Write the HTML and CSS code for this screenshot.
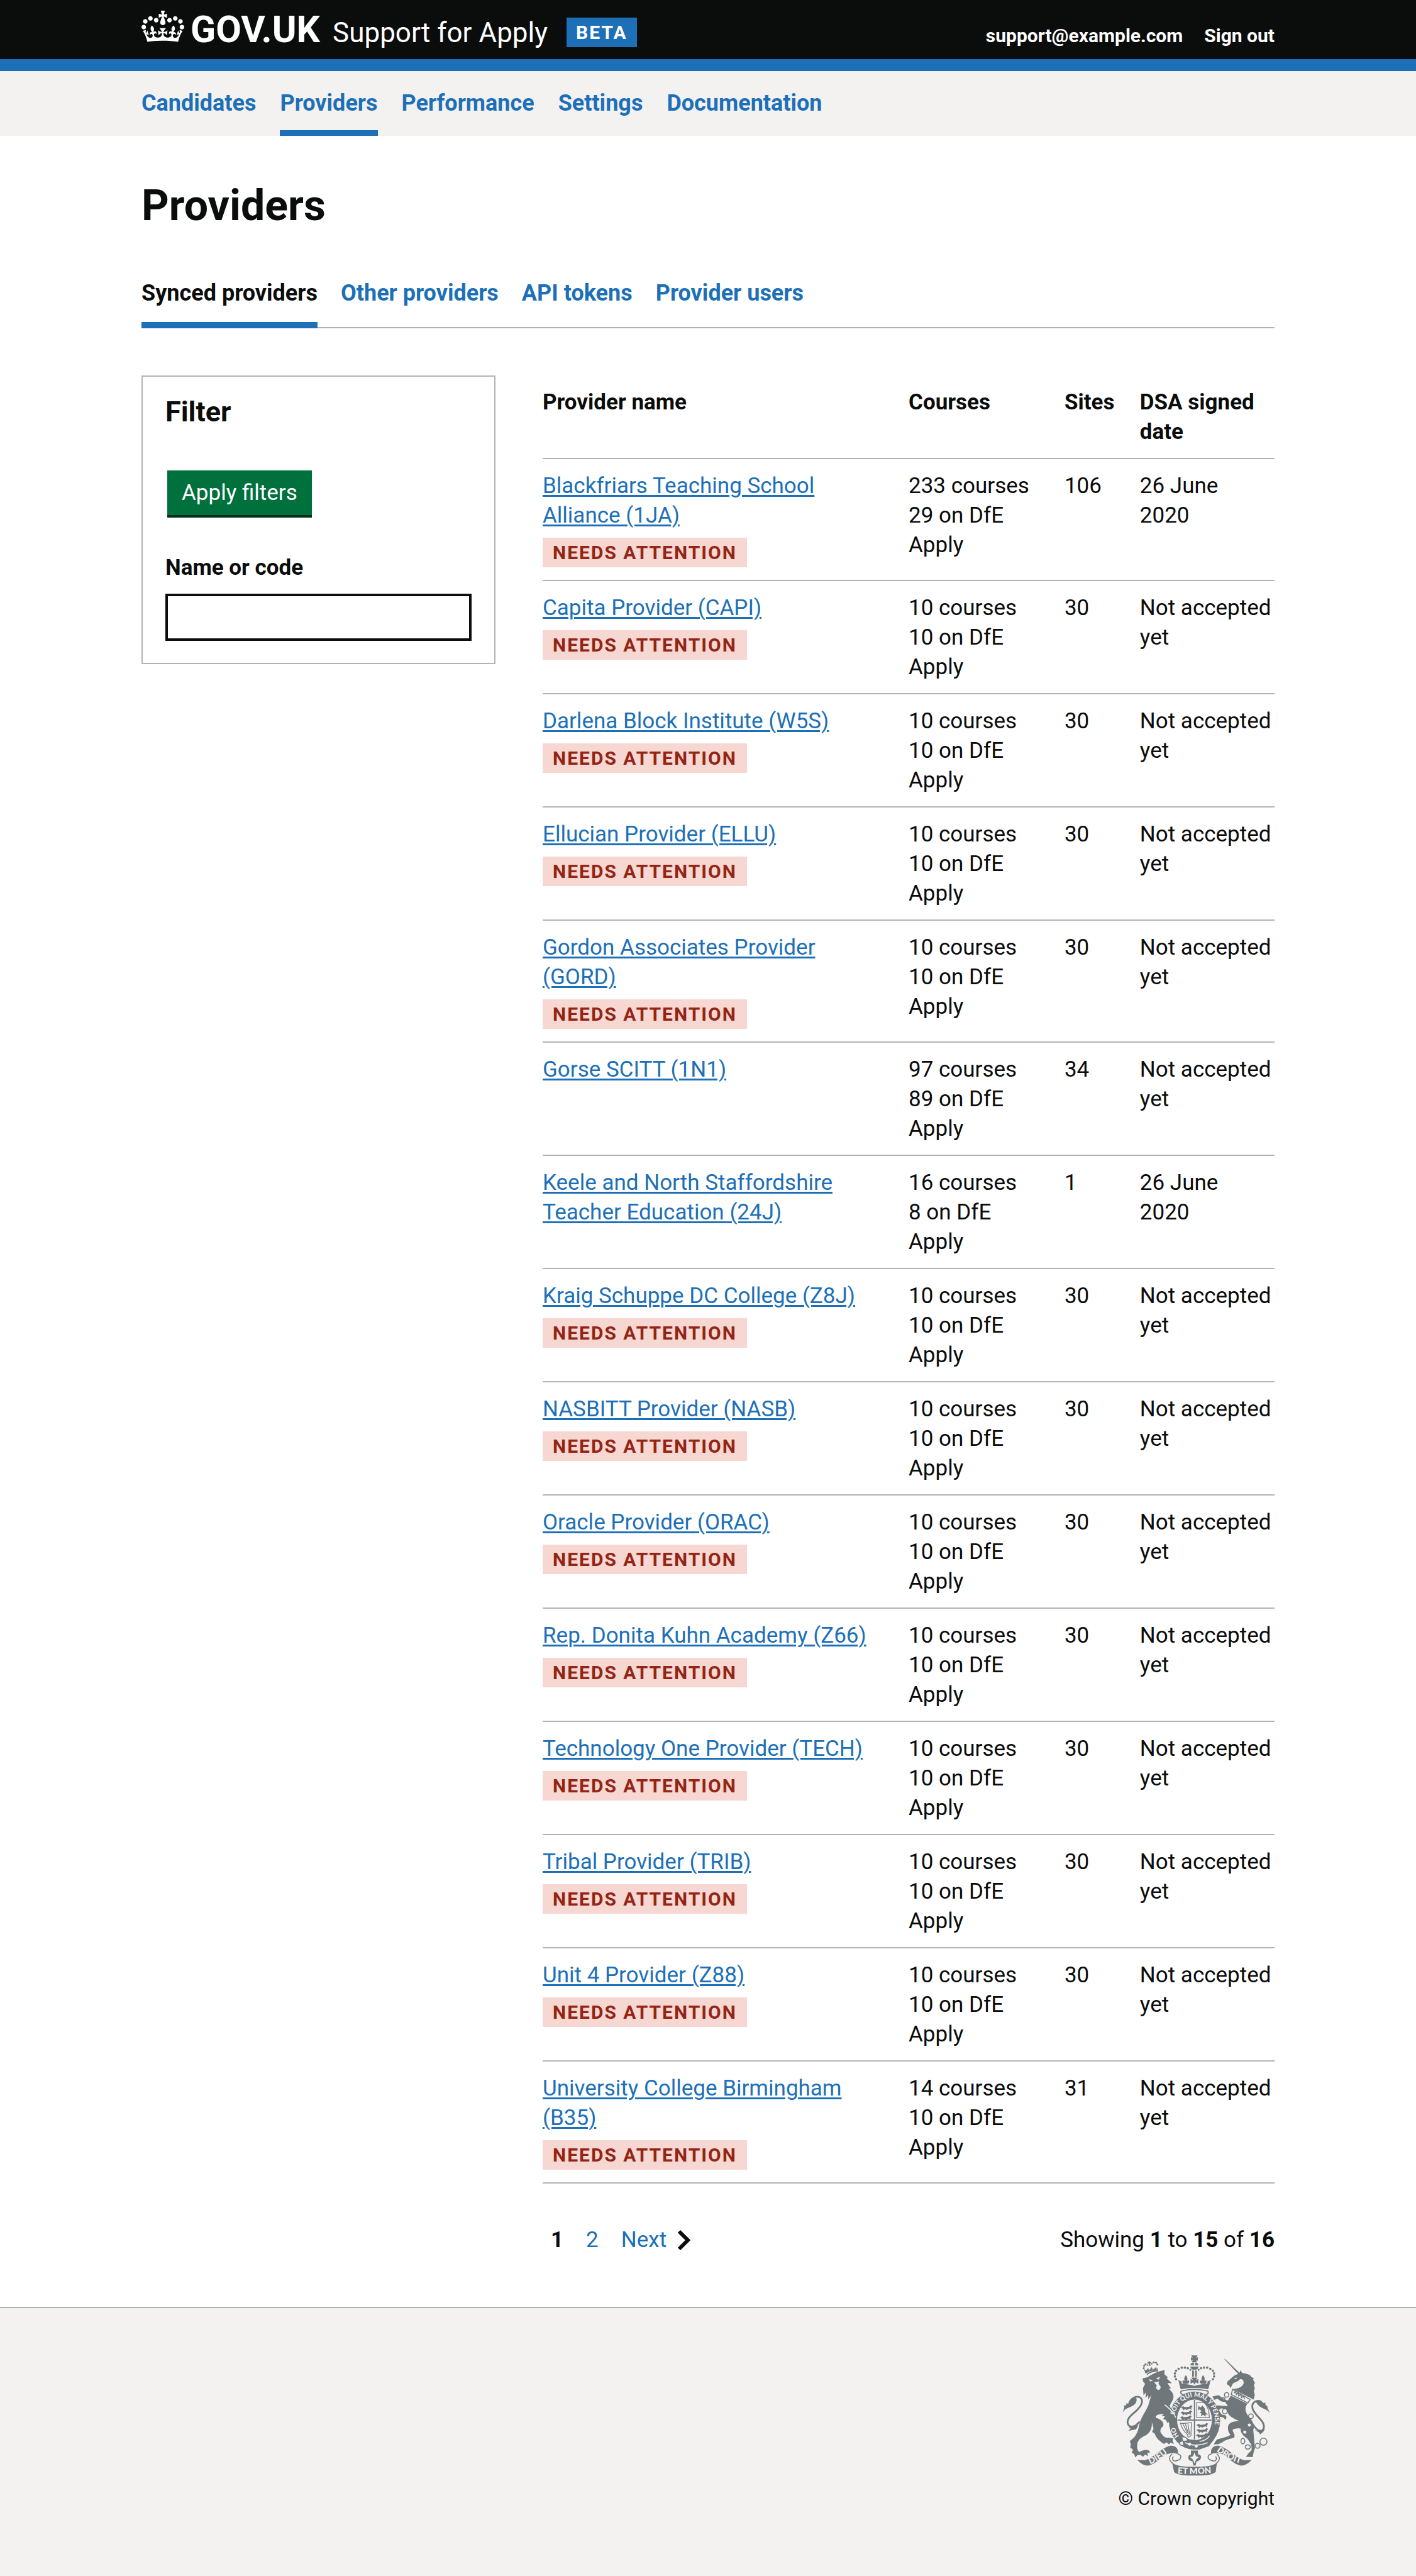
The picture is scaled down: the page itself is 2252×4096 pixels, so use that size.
FILE: index.html
```html
<!DOCTYPE html>
<html lang="en">
<head>
<meta charset="utf-8">
<title>Providers - Support for Apply</title>
<link rel="stylesheet" href="styles.css">
</head>
<body>
<header class="header">
  <div class="container header-row">
    <a class="logo" href="#">
      <svg class="crown" viewBox="0 0 132 97" aria-hidden="true"><path fill="currentColor" fill-rule="evenodd" d="M25 30.2c3.5 1.5 7.7-.2 9.1-3.7 1.5-3.6-.2-7.8-3.9-9.2-3.6-1.4-7.6.3-9.1 3.9-1.4 3.5.3 7.5 3.9 9zM9 39.5c3.6 1.5 7.8-.2 9.2-3.7 1.5-3.6-.2-7.8-3.9-9.1-3.6-1.5-7.6.2-9.1 3.8-1.4 3.5.3 7.5 3.8 9zM4.4 57.2c3.5 1.5 7.7-.2 9.1-3.8 1.5-3.6-.2-7.7-3.9-9.1-3.5-1.5-7.6.3-9.1 3.8-1.4 3.5.3 7.6 3.9 9.1zm38.3-21.4c3.5 1.5 7.7-.2 9.1-3.8 1.5-3.6-.2-7.7-3.9-9.1-3.6-1.5-7.6.3-9.1 3.8-1.3 3.6.4 7.7 3.9 9.1zm64.4-5.6c-3.6 1.5-7.8-.2-9.1-3.7-1.5-3.6.2-7.8 3.8-9.2 3.6-1.4 7.7.3 9.2 3.9 1.3 3.5-.4 7.5-3.9 9zm15.9 9.3c-3.6 1.5-7.7-.2-9.1-3.7-1.5-3.6.2-7.8 3.7-9.1 3.6-1.5 7.7.2 9.2 3.8 1.5 3.5-.3 7.5-3.8 9zm4.7 17.7c-3.6 1.5-7.8-.2-9.2-3.8-1.5-3.6.2-7.7 3.9-9.1 3.6-1.5 7.7.3 9.2 3.8 1.3 3.5-.4 7.6-3.9 9.1zM89.3 35.8c-3.6 1.5-7.8-.2-9.2-3.8-1.4-3.6.2-7.7 3.9-9.1 3.6-1.5 7.7.3 9.2 3.8 1.4 3.6-.3 7.7-3.9 9.1zM69.7 17.7l8.9 4.7V9.3l-8.9 2.8c-.2-.3-.5-.6-.9-.9L72.4 0H59.6l3.5 11.2c-.3.3-.6.5-.9.9l-8.8-2.8v13.1l8.8-4.7c.3.3.6.7.9.9l-5 15.4v.1c-.2.8-.4 1.6-.4 2.4 0 4.1 3.1 7.5 7 8.1h.2c.3 0 .7.1 1 .1.4 0 .7 0 1-.1h.2c4-.6 7.1-4.1 7.1-8.1 0-.8-.1-1.7-.4-2.4V34l-5.1-15.4c.4-.2.7-.6 1-.9zM66 92.8c16.9 0 32.8 1.1 47.1 3.2 4-16.9 8.9-26.7 14-33.5l-9.6-3.4c1 4.9 1.1 7.2 0 10.2-1.5-1.4-3-4.3-4.2-8.7L108.6 76c2.8-2 5-3.2 7.5-3.3-4.4 9.4-10 11.9-13.6 11.2-4.3-.8-6.3-4.6-5.6-7.9 1-4.7 5.7-5.9 8-.5 4.3-8.7-3-11.4-7.6-8.8 7.1-7.2 7.9-13.5 2.1-21.1-8 6.1-8.1 12.3-4.5 20.8-4.7-5.4-12.1-2.5-9.5 6.2 3.4-5.2 7.9-2 7.2 3.1-.6 4.3-6.4 7.8-13.5 7.2-10.3-.9-10.9-8-11.2-13.8 2.5-.5 7.1 1.8 11 7.3L80.2 60c-4.1 4.4-8 5.3-12.3 5.4 1.4-4.4 8-11.6 8-11.6H55.5s6.4 7.2 7.9 11.6c-4.2-.1-8-1-12.3-5.4l1.4 16.4c3.9-5.5 8.5-7.7 10.9-7.3-.3 5.8-.9 12.8-11.1 13.8-7.2.6-12.9-2.9-13.5-7.2-.7-5 3.8-8.3 7.1-3.1 2.7-8.7-4.6-11.6-9.4-6.2 3.7-8.5 3.6-14.7-4.6-20.8-5.8 7.6-5 13.9 2.2 21.1-4.7-2.6-11.9.1-7.7 8.8 2.3-5.5 7.1-4.2 8.1.5.7 3.3-1.3 7.1-5.7 7.9-3.5.7-9-1.8-13.5-11.2 2.5.1 4.7 1.3 7.5 3.3l-4.7-15.4c-1.2 4.4-2.7 7.2-4.3 8.7-1.1-3-.9-5.3 0-10.2l-9.5 3.4c5 6.9 9.9 16.7 14 33.5 14.8-2.1 30.8-3.2 47.7-3.2z"/></svg>
      <span class="logo-text">GOV.UK</span>
    </a>
    <a class="service-name" href="#">Support for Apply</a>
    <strong class="phase-tag">BETA</strong>
    <nav class="account" aria-label="Account">
      <a href="#">support@example.com</a>
      <a href="#">Sign out</a>
    </nav>
  </div>
</header>

<div class="primary-nav">
  <nav class="container nav-list" aria-label="Primary">
    <a href="#">Candidates</a>
    <a href="#" class="current" aria-current="page">Providers</a>
    <a href="#">Performance</a>
    <a href="#">Settings</a>
    <a href="#">Documentation</a>
  </nav>
</div>

<main class="container">
  <h1 class="page-title">Providers</h1>
  <nav class="tabs" aria-label="Provider sections">
    <a href="#" class="active" aria-current="page">Synced providers</a>
    <a href="#">Other providers</a>
    <a href="#">API tokens</a>
    <a href="#">Provider users</a>
  </nav>

  <div class="columns">
    <form class="filter">
      <h2 class="filter-title">Filter</h2>
      <button class="apply" type="button">Apply filters</button>
      <label class="filter-label" for="name-or-code">Name or code</label>
      <input class="filter-input" id="name-or-code" type="text">
    </form>

    <div class="results">
      <table class="providers">
        <colgroup><col class="col-name"><col class="col-courses"><col class="col-sites"><col class="col-date"></colgroup>
        <thead>
          <tr><th scope="col">Provider name</th><th scope="col">Courses</th><th scope="col">Sites</th><th scope="col">DSA signed date</th></tr>
        </thead>
        <tbody>
          <tr><td><a href="#">Blackfriars Teaching School Alliance (1JA)</a><strong class="tag">NEEDS ATTENTION</strong></td><td>233 courses<br>29 on DfE Apply</td><td>106</td><td>26 June<br>2020</td></tr>
          <tr><td><a href="#">Capita Provider (CAPI)</a><strong class="tag">NEEDS ATTENTION</strong></td><td>10 courses<br>10 on DfE Apply</td><td>30</td><td>Not accepted yet</td></tr>
          <tr><td><a href="#">Darlena Block Institute (W5S)</a><strong class="tag">NEEDS ATTENTION</strong></td><td>10 courses<br>10 on DfE Apply</td><td>30</td><td>Not accepted yet</td></tr>
          <tr><td><a href="#">Ellucian Provider (ELLU)</a><strong class="tag">NEEDS ATTENTION</strong></td><td>10 courses<br>10 on DfE Apply</td><td>30</td><td>Not accepted yet</td></tr>
          <tr><td><a href="#">Gordon Associates Provider (GORD)</a><strong class="tag">NEEDS ATTENTION</strong></td><td>10 courses<br>10 on DfE Apply</td><td>30</td><td>Not accepted yet</td></tr>
          <tr><td><a href="#">Gorse SCITT (1N1)</a></td><td>97 courses<br>89 on DfE Apply</td><td>34</td><td>Not accepted yet</td></tr>
          <tr><td><a href="#">Keele and North Staffordshire Teacher Education (24J)</a></td><td>16 courses<br>8 on DfE<br>Apply</td><td>1</td><td>26 June<br>2020</td></tr>
          <tr><td><a href="#">Kraig Schuppe DC College (Z8J)</a><strong class="tag">NEEDS ATTENTION</strong></td><td>10 courses<br>10 on DfE Apply</td><td>30</td><td>Not accepted yet</td></tr>
          <tr><td><a href="#">NASBITT Provider (NASB)</a><strong class="tag">NEEDS ATTENTION</strong></td><td>10 courses<br>10 on DfE Apply</td><td>30</td><td>Not accepted yet</td></tr>
          <tr><td><a href="#">Oracle Provider (ORAC)</a><strong class="tag">NEEDS ATTENTION</strong></td><td>10 courses<br>10 on DfE Apply</td><td>30</td><td>Not accepted yet</td></tr>
          <tr><td><a href="#">Rep. Donita Kuhn Academy (Z66)</a><strong class="tag">NEEDS ATTENTION</strong></td><td>10 courses<br>10 on DfE Apply</td><td>30</td><td>Not accepted yet</td></tr>
          <tr><td><a href="#">Technology One Provider (TECH)</a><strong class="tag">NEEDS ATTENTION</strong></td><td>10 courses<br>10 on DfE Apply</td><td>30</td><td>Not accepted yet</td></tr>
          <tr><td><a href="#">Tribal Provider (TRIB)</a><strong class="tag">NEEDS ATTENTION</strong></td><td>10 courses<br>10 on DfE Apply</td><td>30</td><td>Not accepted yet</td></tr>
          <tr><td><a href="#">Unit 4 Provider (Z88)</a><strong class="tag">NEEDS ATTENTION</strong></td><td>10 courses<br>10 on DfE Apply</td><td>30</td><td>Not accepted yet</td></tr>
          <tr><td><a href="#">University College Birmingham (B35)</a><strong class="tag">NEEDS ATTENTION</strong></td><td>14 courses<br>10 on DfE Apply</td><td>31</td><td>Not accepted yet</td></tr>
        </tbody>
      </table>

      <nav class="pagination" aria-label="Pagination">
        <div class="pages">
          <strong>1</strong>
          <a href="#">2</a>
          <a class="next" href="#">Next <svg class="chevron" viewBox="0 0 23 34" aria-hidden="true"><path d="M4 3l14 14L4 31" fill="none" stroke="#0b0c0c" stroke-width="6"/></svg></a>
        </div>
        <p class="showing">Showing <b>1</b> to <b>15</b> of <b>16</b></p>
      </nav>
    </div>
  </div>
</main>

<footer class="footer">
  <div class="container footer-row">
    <a class="copyright" href="#">
      <svg class="crest" viewBox="130 94 754 616" aria-hidden="true">
        <defs>
          <path id="garter" d="M498 548A104 121 0 0 1 498 306A104 121 0 0 1 498 548"/>
          <path id="scroll-left" d="M273 650Q325 626 376 581"/>
          <path id="scroll-right" d="M610 583Q665 626 738 648"/>
          <path id="scroll-mid" d="M412 697Q498 704 590 695"/>
          <g id="passant"><path d="M0 8l12-6 8 5 22-2 10-8 8 5-7 9 3 10-9-6-8 1-10 6-6-6-10 7-3-8z"/></g>
        </defs>
        <g class="ink">
          <!-- lion -->
          <path d="M233 212L258 206C290 184 320 174 346 170L344 190 362 206 356 212 383 237 360 236 378 263 366 264C388 282 396 300 388 320L372 350C374 366 388 378 402 392L408 432 400 452 388 440 378 448 372 432 360 440 352 424 338 420 347 405 330 404 342 394C320 392 298 398 300 412 334 424 344 440 338 456 322 470 320 484 330 494 340 510 352 518 366 514L390 518 386 528 393 546 376 540 368 549 355 538 342 546C322 534 300 515 296 495L282 485 289 468 280 432C284 470 268 492 250 502 220 515 208 530 206 548 204 566 207 580 216 588 236 576 258 572 270 584L268 594 258 590 260 609 246 600 235 612 222 602 206 604 196 615 190 598 178 592 184 575 170 565 173 547 168 532 186 517C206 498 214 468 218 440 228 408 250 380 262 350L278 298 262 320 262 296 248 312 250 284 238 298 235 262 246 240 236 228z"/>
          <path class="line" d="M178 318C205 295 236 306 229 338 220 380 150 400 157 440 165 468 195 462 218 432" stroke-width="9"/>
          <path d="M132 386C134 372 145 362 137 350L150 350 150 339 160 341C165 318 185 302 202 314 207 340 186 352 165 360 148 366 138 374 132 386zM147 455L162 462 212 450 200 472 160 480 172 468z"/>
          <path d="M254 190C275 172 295 168 312 170L312 178C290 176 270 184 256 196zM246 182L240 164 250 172 262 160 266 172 280 154 286 168 300 156 308 166 304 150 312 168C290 168 265 176 250 188z"/>
          <g><circle cx="239" cy="160" r="5"/><circle cx="241" cy="148" r="5"/><circle cx="248" cy="140" r="5"/><circle cx="258" cy="144" r="4"/><circle cx="280" cy="137" r="4"/><circle cx="290" cy="130" r="5"/><circle cx="302" cy="132" r="5"/><circle cx="309" cy="141" r="5"/><path d="M259 127l6 3-1-6h6l0 6 7-2v8l-6-1 3 13h-8l-2-12-6 1z"/></g>
          <!-- unicorn -->
          <path d="M648 111L656 115 728 184 732 170 742 185C770 188 786 196 788 205L801 212 797 218 807 236 801 244 806 264 801 276 806 298 799 320 780 310 692 266C720 266 744 256 749 236 750 222 742 214 730 216 722 228 704 232 694 238L682 262 676 250 662 240 668 226C684 214 700 192 722 190L708 176z"/>
          <path d="M684 300L768 342C752 362 756 384 776 408 796 430 806 454 798 476L802 514 806 570 800 588 795 614 760 612 774 594 790 578 788 550 768 520C744 504 732 486 733 468 712 466 698 468 692 476 696 490 708 502 700 514 680 520 655 525 640 538L618 548 595 549 612 524C640 516 670 510 682 500 670 488 666 468 670 454 676 436 696 430 725 430 702 416 678 410 668 388L660 368 634 365 622 374 637 396 656 400 662 410 657 424 645 412 628 408 605 362 612 350 668 354 655 332 632 328 615 315 598 322 590 304 622 298 646 318 668 325z"/>
          <path class="line" d="M838 330C810 318 786 338 795 368 808 404 858 430 852 462 848 486 820 490 792 440" stroke-width="9"/>
          <path d="M882 388C878 372 868 366 870 352L860 348 860 336 850 338C840 322 818 320 812 332 822 352 838 360 850 366 866 372 874 378 882 388zM806 476L830 480 858 470 848 486 832 498 828 488z"/>
          <g class="line" stroke-width="5"><ellipse cx="662" cy="296" rx="11" ry="12"/><ellipse cx="645" cy="320" rx="9" ry="9"/><ellipse cx="653" cy="380" rx="12" ry="13"/><ellipse cx="786" cy="405" rx="12" ry="12"/><ellipse cx="745" cy="532" rx="10" ry="14"/><ellipse cx="770" cy="562" rx="13" ry="11"/><ellipse cx="820" cy="556" rx="13" ry="12"/><circle cx="850" cy="535" r="18"/></g>
          <!-- royal crown -->
          <path d="M481 95H514L506 108 515 104V122L505 117 512 130H484L490 117 480 122V104L489 108zM477 145C479 134 486 132 495 132V146zM518 145C517 134 510 132 501 132V146zM477 152H519C516 166 510 168 498 168S480 166 477 152zM486 172H495V204H486zM501 172H510V204H501zM482 208H514L505 222 518 214V240L505 232 498 244 491 232 478 240V214L491 222z"/>
          <g id="arch"><circle cx="404" cy="216" r="6"/><circle cx="398" cy="202" r="6"/><circle cx="398" cy="187" r="6"/><circle cx="404" cy="173" r="6"/><circle cx="417" cy="163" r="6"/><circle cx="433" cy="157" r="6"/><circle cx="449" cy="157" r="6"/><circle cx="464" cy="160" r="6"/><circle cx="477" cy="168" r="5"/><path d="M454 196C464 208 464 218 459 224L470 222C474 234 466 240 458 240H450C440 240 434 232 438 222L449 224C444 218 444 208 454 196zM414 220L432 228V242L424 240z"/></g>
          <use href="#arch" transform="matrix(-1 0 0 1 996 0)"/>
          <path d="M418 232C440 244 470 240 498 250 526 240 556 244 578 232L568 268C520 258 476 258 428 268z"/>
          <path class="line" d="M440 294C424 292 424 276 438 275 478 266 518 266 558 275 572 276 572 292 556 294" stroke-width="6"/>
          <!-- garter and shield -->
          <ellipse cx="498" cy="427" rx="131" ry="148"/>
        </g>
        <ellipse class="paper" cx="498" cy="424" rx="89" ry="104"/>
        <g class="ink">
          <path d="M495 322H501V524H495zM411 422H585V428H411z"/>
          <use href="#passant" x="428" y="352"/><use href="#passant" x="426" y="378"/><use href="#passant" x="424" y="403"/>
          <use href="#passant" x="508" y="442"/><use href="#passant" x="508" y="468"/><use href="#passant" x="505" y="494"/>
          <path class="line" d="M510 334H546Q572 356 574 412H510zM426 440C450 446 470 438 482 438L480 505Q460 520 464 500 438 480 426 440zM440 446L462 492M452 446L468 498M464 444L474 500" stroke-width="4"/>
          <path d="M518 352l12 8 8-10 12 14 4 20 12 14-12-2 2 12-14-10-12 8 4-14-10-8 10-4-8-10-10 4z"/>
          <path d="M424 510L444 506 462 522 540 530 600 520 572 558 520 576 450 566 424 548z"/>
          <path d="M480 580H516V600C536 598 536 622 520 632L508 636 504 656H492L488 636 472 630C462 618 466 600 480 602z"/>
        </g>
        <g class="paper">
          <path d="M266 216l20 6-14 6zM302 212l20-8-6 14zM292 232l26-4-4 12 10 12c6 22-20 26-22 6l4-10zM700 210l18-2-10 8z"/>
          <circle cx="473" cy="548" r="8"/><circle cx="507" cy="558" r="8"/><circle cx="778" cy="450" r="8"/><circle cx="755" cy="486" r="8"/>
          <path d="M498 590l8 20 14 4-14 12-8 20-8-20-14-12 14-4z"/>
        </g>
        <path class="edge" d="M346 346C376 372 396 388 402 412M524 534Q560 528 575 505M450 540Q500 565 565 540"/>
        <path class="buckle" d="M432 512C452 506 462 520 464 530L440 534 444 556C424 556 418 546 424 536L438 530z"/>
        <path class="buckle" d="M692 268L782 320 770 338 686 294zM700 288l6-10 6 16 8-10 4 18 10-10 4 18 10-8 6 16"/>
        <g class="ink">
          <path id="scroll" d="M206 628L244 630C290 616 330 566 372 556 402 552 420 574 412 598 394 590 362 592 342 606 312 630 286 656 258 657 238 656 222 644 206 628z"/>
          <use href="#scroll" transform="matrix(-1 0 0 1 996 0)"/>
          <path d="M384 640C400 660 450 663 498 663S596 660 613 640L606 690C584 708 540 708 498 708S412 706 394 690z"/>
          <path class="line" d="M384 598C366 612 366 632 388 646M412 597C438 606 430 624 412 630 392 640 380 628 390 610M612 598C630 612 630 632 608 646M584 597C558 606 566 624 584 630 604 640 616 628 606 610" stroke-width="5"/>
        </g>
        <g class="motto">
          <text><textPath href="#garter" startOffset="92">HO</textPath></text>
          <text><textPath href="#garter" startOffset="204">SOIT QUI MAL Y PENSE</textPath></text>
          <text class="big"><textPath href="#scroll-left">DIEU</textPath></text>
          <text class="big"><textPath href="#scroll-mid">ET MON</textPath></text>
          <text class="big"><textPath href="#scroll-right">DROIT</textPath></text>
        </g>
      </svg>
      <span>© Crown copyright</span>
    </a>
  </div>
</footer>
</body>
</html>
```
FILE: styles.css
```css
*, *::before, *::after { box-sizing: border-box; }

body {
  margin: 0;
  background: #fff;
  color: #0b0c0c;
  font-family: Roboto, "Liberation Sans", sans-serif;
  font-size: 35px;
  line-height: 47px;
}

a { color: #1d70b8; text-decoration: none; }

.container {
  width: calc(100% - 120px);
  max-width: 1802px;
  margin: 0 auto;
}

/* Header */
.header { background: #0b0c0c; border-bottom: 19px solid #1d70b8; }
.header a { color: #fff; }
.header-row {
  display: flex;
  align-items: baseline;
  padding-top: 17px;
  min-height: 94px;
}
.logo { display: flex; align-items: baseline; gap: 10px; }
.crown { width: 68px; height: 50px; margin-bottom: -3px; }
.logo-text { font-size: 59px; font-weight: 700; line-height: 56px; }
.service-name { margin-left: 20px; font-size: 44px; line-height: 56px; }
.phase-tag {
  align-self: flex-start;
  margin: 11px 0 0 30px;
  padding: 0 15px;
  background: #1d70b8;
  color: #fff;
  font-size: 30px;
  letter-spacing: 2px;
}
.account { display: flex; gap: 34px; margin-left: auto; font-size: 30px; font-weight: 700; }

/* Primary navigation */
.primary-nav { background: #f3f2f1; }
.nav-list { display: flex; gap: 38px; font-size: 36px; font-weight: 700; }
.nav-list a { padding: 28px 0 19px; border-bottom: 9px solid transparent; }
.nav-list .current { border-color: #1d70b8; }

/* Page heading and tabs */
.page-title { margin: 74px 0 78px; font-size: 68px; line-height: 75px; }
.tabs {
  display: flex;
  gap: 37px;
  margin-bottom: 75px;
  box-shadow: inset 0 -2px #b1b4b6;
  font-size: 36px;
  font-weight: 700;
}
.tabs a { padding-bottom: 22px; border-bottom: 10px solid transparent; }
.tabs .active { color: #0b0c0c; border-color: #1d70b8; }

.columns {
  display: grid;
  grid-template-columns: 563fr 1164fr;
  column-gap: 75px;
  align-items: start;
}

/* Filter */
.filter { padding: 28px 36px 35px; border: 2px solid #b1b4b6; }
.filter-title { margin: 0 0 65px; font-size: 45px; line-height: 56px; }
.apply {
  display: block;
  margin: 0 0 56px 3px;
  padding: 12px 23px;
  border: 0;
  border-bottom: 4px solid #002d18;
  background: #00703c;
  color: #fff;
  font: inherit;
}
.filter-label { display: block; margin-bottom: 18px; font-weight: 700; }
.filter-input {
  display: block;
  width: 100%;
  height: 75px;
  padding: 8px;
  border: 4px solid #0b0c0c;
  border-radius: 0;
  background: #fff;
  font: inherit;
}

/* Providers table */
.providers { width: 100%; table-layout: fixed; border-collapse: separate; border-spacing: 0; }
.col-name { width: 50%; }
.col-courses { width: 21.3%; }
.col-sites { width: 10.3%; }
.col-date { width: 18.4%; }
.providers th, .providers td {
  padding: 19px 36px 18px 0;
  border-bottom: 2px solid #b1b4b6;
  text-align: left;
  vertical-align: top;
}
.providers th:last-child, .providers td:last-child { padding-right: 0; }
.providers a {
  text-decoration: underline;
  text-decoration-thickness: 3px;
  text-underline-offset: 3px;
}
.tag {
  display: block;
  width: fit-content;
  margin: 12px 0 2px;
  padding: 0 16px;
  background: #f6d7d2;
  color: #942514;
  font-size: 30px;
  letter-spacing: 2px;
}

/* Pagination */
.pagination {
  display: flex;
  justify-content: space-between;
  margin: 66px 0 83px;
}
.pages { display: flex; gap: 36px; padding-left: 13px; }
.next { display: flex; align-items: center; gap: 16px; }
.chevron { width: 23px; height: 34px; }
.showing { margin: 0; }

/* Footer */
.footer { background: #f3f2f1; border-top: 2px solid #b1b4b6; }
.footer-row { display: flex; justify-content: flex-end; padding: 75px 0 106px; }
.copyright {
  display: flex;
  flex-direction: column;
  align-items: center;
  gap: 17px;
  color: #0b0c0c;
  font-size: 30px;
  line-height: 37px;
}
.crest { width: 235px; height: 192px; }
.ink { fill: #6f777b; }
.line { fill: none; stroke: #6f777b; }
.paper { fill: #f3f2f1; }
.edge { fill: none; stroke: #f3f2f1; stroke-width: 5px; }
.buckle { fill: #f3f2f1; stroke: #6f777b; stroke-width: 5px; }
.motto { fill: #f3f2f1; font-family: Lato, sans-serif; font-size: 32px; font-weight: 900; }
.motto .big { font-size: 44px; }
```
